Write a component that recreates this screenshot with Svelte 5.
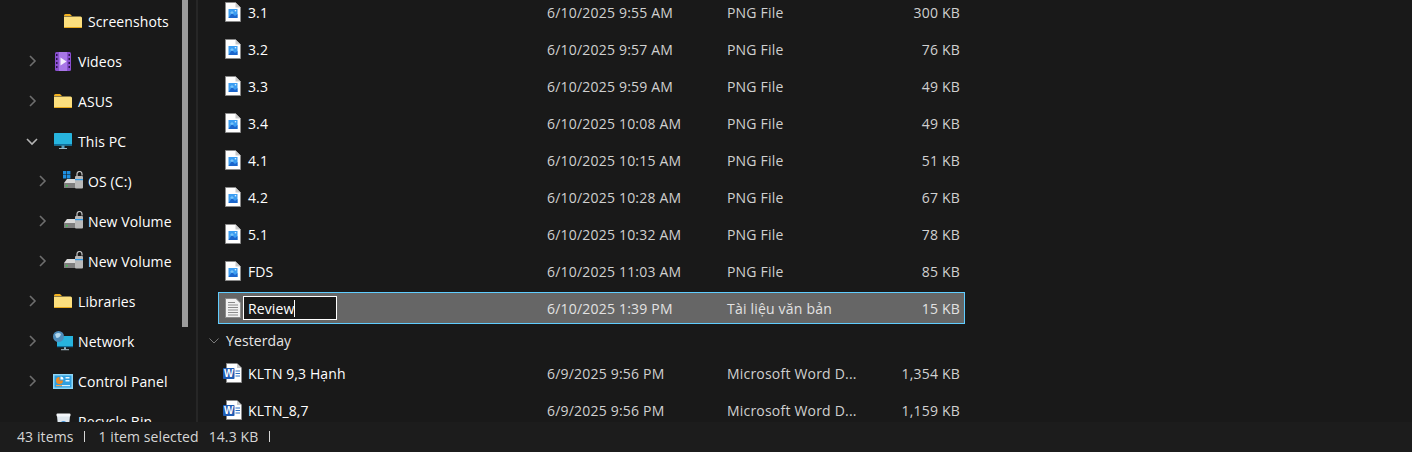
<script>
  const navItems = [
    { label: 'Screenshots', icon: 'folder', depth: 1, chevron: null },
    { label: 'Videos', icon: 'video', depth: 0, chevron: 'right' },
    { label: 'ASUS', icon: 'folder', depth: 0, chevron: 'right' },
    { label: 'This PC', icon: 'pc', depth: 0, chevron: 'down' },
    { label: 'OS (C:)', icon: 'osdrive', depth: 1, chevron: 'right' },
    { label: 'New Volume', icon: 'drive', depth: 1, chevron: 'right' },
    { label: 'New Volume', icon: 'drive', depth: 1, chevron: 'right' },
    { label: 'Libraries', icon: 'folder', depth: 0, chevron: 'right' },
    { label: 'Network', icon: 'network', depth: 0, chevron: 'right' },
    { label: 'Control Panel', icon: 'panel', depth: 0, chevron: 'right' },
    { label: 'Recycle Bin', icon: 'bin', depth: 0, chevron: null }
  ];

  const today = [
    ['3.1', '6/10/2025 9:55 AM', '300 KB'],
    ['3.2', '6/10/2025 9:57 AM', '76 KB'],
    ['3.3', '6/10/2025 9:59 AM', '49 KB'],
    ['3.4', '6/10/2025 10:08 AM', '49 KB'],
    ['4.1', '6/10/2025 10:15 AM', '51 KB'],
    ['4.2', '6/10/2025 10:28 AM', '67 KB'],
    ['5.1', '6/10/2025 10:32 AM', '78 KB'],
    ['FDS', '6/10/2025 11:03 AM', '85 KB']
  ];

  const yesterday = [
    ['KLTN 9,3 Hạnh', '6/9/2025 9:56 PM', '1,354 KB'],
    ['KLTN_8,7', '6/9/2025 9:56 PM', '1,159 KB']
  ];
</script>

{#snippet navIcon(kind)}
  <svg class="nav-icon" viewBox="0 0 20 20" width="20" height="20" aria-hidden="true">
    {#if kind === 'folder'}
      <path d="M1 4.5 Q1 3 2.5 3 H7 L9 5 H1Z" fill="#f2b01e" />
      <path d="M1 5.5 H17.5 Q19 5.5 19 7 V16 Q19 17 18 17 H2 Q1 17 1 16Z" fill="#fcdf7e" />
      <path d="M1 16 H19 V16.2 Q19 17 18 17 H2 Q1 17 1 16.2Z" fill="#e8a91c" />
    {:else if kind === 'video'}
      <rect x="2" y="1" width="16" height="19" rx="1.5" fill="#8a4fd0" />
      <rect x="6" y="1" width="8" height="19" fill="#a877e6" />
      <path d="M7.5 6.5 L13.5 10.5 L7.5 14.5Z" fill="#f4eefc" />
      <path d="M3 3h1.5v2H3zM3 7h1.5v2H3zM3 11h1.5v2H3zM3 15h1.5v2H3zM15.5 3H17v2h-1.5zM15.5 7H17v2h-1.5zM15.5 11H17v2h-1.5zM15.5 15H17v2h-1.5z" fill="#2c1450" />
    {:else if kind === 'pc'}
      <rect x="1" y="2" width="18" height="12.5" rx="0.6" fill="#27b4de" />
      <rect x="1" y="13" width="18" height="1.5" fill="#0f6f9c" />
      <rect x="8.5" y="14.5" width="3" height="2.5" fill="#5aa0bd" />
      <rect x="6" y="17" width="8" height="1" fill="#9fbac6" />
    {:else if kind === 'drive' || kind === 'osdrive'}
      {#if kind === 'osdrive'}
        <path d="M0 0h3.4v3.4H0zM4 0h3.4v3.4H4zM0 4h3.4v3.4H0zM4 4h3.4v3.4H4z" fill="#1e8fe0" />
      {/if}
      <path d="M4 8 H14 V17 H1 V12Z" fill="#d9d9d9" />
      <rect x="1" y="12" width="14" height="5" fill="#7e7e7e" />
      <rect x="3" y="14" width="1.5" height="1.5" fill="#35d04a" />
      <path d="M14 5 V3 a2.5 2.5 0 0 1 5 0 V4.5" fill="none" stroke="#c4c4c4" stroke-width="1.2" />
      <rect x="12" y="5" width="8" height="12.5" rx="1" fill="#b9b9b9" />
      <rect x="12" y="8" width="8" height="1.2" fill="#2d9ae8" />
    {:else if kind === 'network'}
      <rect x="4" y="5" width="16" height="11" fill="#27b4de" />
      <rect x="4" y="15" width="16" height="1.2" fill="#0f6f9c" />
      <rect x="11" y="16.2" width="2" height="2" fill="#8fb7c7" />
      <rect x="8" y="18.2" width="8" height="1" fill="#a9c0ca" />
      <circle cx="5.5" cy="5.5" r="5.5" fill="#4f8dbb" />
      <path d="M2 3.5 Q5 1 8 3 Q7 7 3.5 7Z" fill="#b6d9ee" />
    {:else if kind === 'panel'}
      <rect x="0" y="3" width="20" height="15" fill="#8fd6f7" />
      <rect x="1.5" y="4.5" width="17" height="12" fill="#2f9fe0" />
      <path d="M6.5 6 a3.5 3.5 0 1 0 3.5 3.5 H6.5Z" fill="#f08a24" />
      <path d="M7.5 5.5 a3 3 0 0 1 3 3 H7.5Z" fill="#fff" />
      <rect x="12.5" y="6" width="4" height="1.5" fill="#e8f6fe" />
      <rect x="12.5" y="9" width="4" height="1.5" fill="#e8f6fe" />
      <rect x="3" y="14" width="6" height="1.2" fill="#f0a04c" />
      <rect x="9" y="14" width="8" height="1.2" fill="#d8f0fc" />
    {:else if kind === 'bin'}
      <path d="M4 5 H17 L15.5 20 H5.5Z" fill="#dfe7ee" />
      <rect x="3.5" y="2.5" width="14" height="3" rx="1" fill="#f4f7fa" />
      <circle cx="10.5" cy="13" r="3" fill="#3a8fd8" />
    {/if}
  </svg>
{/snippet}

{#snippet pngIcon()}
  <svg class="file-icon" viewBox="0 0 16 20" width="16" height="20" aria-hidden="true">
    <path d="M0.5 0.5 H10.5 L15.5 5.5 V19.5 H0.5Z" fill="#fff" stroke="#8a8a8a" />
    <path d="M10.5 0.5 V5.5 H15.5Z" fill="#c9c9c9" />
    <rect x="3.5" y="7" width="9" height="9" fill="#3b9df2" />
    <path d="M3.5 16 L7 11 L10 14 L12.5 12 V16Z" fill="#1c66cc" />
    <path d="M5 11 L7 9 L9 11 L7 12Z" fill="#7cc6f8" />
    <rect x="9.8" y="8" width="1.4" height="1.4" fill="#d4edff" />
  </svg>
{/snippet}

{#snippet textIcon()}
  <svg class="file-icon" viewBox="0 0 16 20" width="16" height="20" aria-hidden="true">
    <path d="M0.5 0.5 H11 L15.5 5 V19.5 H0.5Z" fill="#f2f2f2" stroke="#8a8a8a" />
    <path d="M3 4.5h7M3 7h10M3 9.5h10M3 12h10M3 14.5h10M3 17h10" stroke="#8c8c8c" stroke-width="1" />
  </svg>
{/snippet}

{#snippet wordIcon()}
  <svg class="word-icon" viewBox="0 0 19 20" width="19" height="20" aria-hidden="true">
    <path d="M3.5 0.5 H14 L18.5 5 V19.5 H3.5Z" fill="#fff" stroke="#8a8a8a" />
    <path d="M14 0.5 V5 H18.5Z" fill="#c9c9c9" />
    <path d="M12.5 8h4.5M12.5 10.5h4.5M12.5 13h4.5" stroke="#2b6fc4" stroke-width="1" />
    <rect x="0" y="5" width="11.5" height="11" rx="0.8" fill="#1f5cb4" />
    <text x="5.7" y="14" class="word-w">W</text>
  </svg>
{/snippet}

{#snippet chevron(dir)}
  <svg class="chev" viewBox="0 0 12 12" width="12" height="12" aria-hidden="true">
    {#if dir === 'right'}
      <path d="M4 1 L9 6 L4 11" fill="none" stroke="#6e6e6e" stroke-width="1.6" />
    {:else if dir === 'down'}
      <path d="M1 4 L6 9 L11 4" fill="none" stroke="#b4b4b4" stroke-width="1.6" />
    {/if}
  </svg>
{/snippet}

<div class="explorer">
  <div class="panes">
    <nav class="nav">
      <ul class="nav-list">
        {#each navItems as item}
          <li class="nav-row" class:nested={item.depth === 1}>
            <span class="chev-slot">{@render chevron(item.chevron)}</span>
            {@render navIcon(item.icon)}
            <span class="nav-label">{item.label}</span>
          </li>
        {/each}
      </ul>
      <div class="scroll-track"><div class="scroll-thumb"></div></div>
    </nav>

    <div class="divider"></div>

    <main class="files">
      <div class="rows">
        {#each today as [name, date, size]}
          <div class="row">
            <span class="icon-cell">{@render pngIcon()}</span>
            <span class="name">{name}</span>
            <span class="meta">{date}</span>
            <span class="meta">PNG File</span>
            <span class="meta size">{size}</span>
          </div>
        {/each}

        <div class="row selected">
          <span class="icon-cell">{@render textIcon()}</span>
          <span class="rename">Review<span class="caret"></span></span>
          <span class="meta">6/10/2025 1:39 PM</span>
          <span class="meta">Tài liệu văn bản</span>
          <span class="meta size">15 KB</span>
        </div>

        <div class="group">
          <svg viewBox="0 0 10 6" width="10" height="6" aria-hidden="true">
            <path d="M0.5 0.5 L5 5 L9.5 0.5" fill="none" stroke="#7a7a7a" stroke-width="1" />
          </svg>
          <span>Yesterday</span>
        </div>

        {#each yesterday as [name, date, size]}
          <div class="row">
            <span class="icon-cell word">{@render wordIcon()}</span>
            <span class="name">{name}</span>
            <span class="meta">{date}</span>
            <span class="meta">Microsoft Word D...</span>
            <span class="meta size">{size}</span>
          </div>
        {/each}
      </div>
    </main>
  </div>

  <footer class="status">
    <span>43 items</span>
    <i class="sep"></i>
    <span>1 item selected</span>
    <span class="status-size">14.3 KB</span>
    <i class="sep"></i>
  </footer>
</div>

<style>
  :global(body) {
    margin: 0;
    background: #191919;
  }

  .explorer {
    width: 1412px;
    height: 452px;
    display: flex;
    flex-direction: column;
    overflow: hidden;
    background: #191919;
    color: #fff;
    font-family: "Open Sans", "Noto Sans", sans-serif;
    font-size: 14px;
    letter-spacing: 0.1px;
  }

  .panes {
    display: flex;
    height: 422px;
    overflow: hidden;
  }

  /* nav pane */
  .nav {
    width: 196px;
    flex: 0 0 196px;
    display: flex;
    overflow: hidden;
  }

  .nav-list {
    list-style: none;
    margin: 1px 0 0;
    padding: 0;
    width: 182px;
    flex: 0 0 182px;
  }

  .nav-row {
    height: 40px;
    display: flex;
    align-items: center;
    padding-left: 26px;
    white-space: nowrap;
  }

  .nav-row.nested {
    padding-left: 36px;
  }

  .chev-slot {
    width: 26px;
    flex: 0 0 26px;
    display: flex;
  }

  .nav-icon {
    flex: 0 0 20px;
    margin-right: 5px;
    margin-left: 1px;
  }

  .scroll-track {
    width: 6px;
    height: 100%;
  }

  .scroll-thumb {
    height: 327px;
    background: #9b9b9b;
  }

  .divider {
    width: 2px;
    flex: 0 0 2px;
    background: #262626;
  }

  /* file list */
  .files {
    flex: 1;
    min-width: 0;
    overflow: hidden;
  }

  .rows {
    width: 747px;
    margin: -4px 0 0 20px;
    display: flex;
    flex-direction: column;
    gap: 5px;
  }

  .row {
    height: 32px;
    box-sizing: border-box;
    border: 1px solid transparent;
    display: grid;
    grid-template-columns: 23px 299px 180px 1fr 70px;
    align-items: center;
    padding-left: 6px;
    padding-right: 4px;
  }

  .row.selected {
    background: #666;
    border-color: #60cdff;
  }

  .icon-cell {
    display: flex;
  }

  .icon-cell.word {
    margin-left: -2px;
  }

  .name {
    white-space: nowrap;
  }

  .meta {
    color: #d0d0d0;
    white-space: nowrap;
    letter-spacing: 0.2px;
  }

  .size {
    text-align: right;
  }

  .selected .meta {
    color: #e2e2e2;
  }

  /* the inline rename box hangs 5px left of the name column */
  .rename {
    box-sizing: border-box;
    height: 24px;
    width: 94px;
    margin-left: -5px;
    padding-left: 4px;
    display: flex;
    align-items: center;
    background: #191919;
    border: 1px solid #fff;
    color: #fff;
  }

  .caret {
    width: 1px;
    height: 17px;
    background: #fff;
  }

  .group {
    height: 21px;
    margin: 1px 0 1px -9px;
    display: flex;
    align-items: center;
    gap: 7px;
    color: #e6e6e6;
  }

  .word-w {
    fill: #fff;
    font-size: 10px;
    font-weight: 700;
    text-anchor: middle;
    font-family: "Liberation Sans", sans-serif;
  }

  /* status bar */
  .status {
    height: 30px;
    box-sizing: border-box;
    background: #1c1c1c;
    display: flex;
    align-items: center;
    padding-left: 17px;
    padding-bottom: 1px;
    color: #d6d6d6;
    white-space: nowrap;
  }

  .sep {
    width: 1px;
    height: 11px;
    background: #d6d6d6;
    margin: 0 13px 0 11px;
  }

  .status-size {
    margin-left: 10px;
  }
</style>
